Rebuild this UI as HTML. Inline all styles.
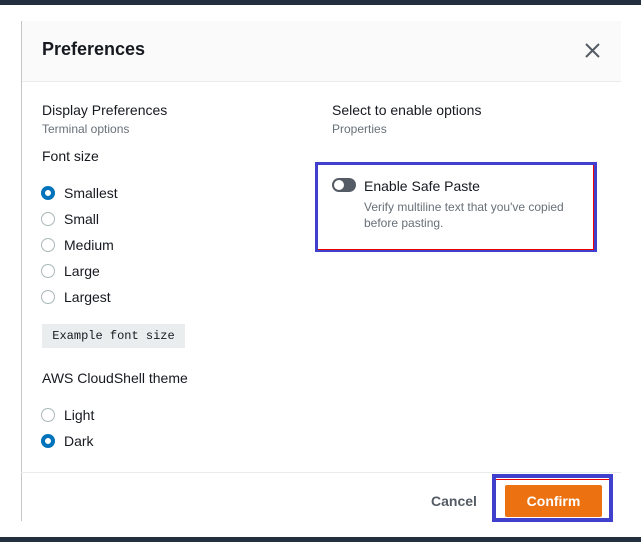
<!DOCTYPE html>
<html><head><style>
body{margin:0;width:641px;height:542px;background:#fff;position:relative;overflow:hidden;font-family:"Liberation Sans",sans-serif;color:#16191f}
.a{position:absolute}
.t{font-size:14px}
.s{font-size:12px;color:#687078}
.r{position:absolute;width:14px;height:14px;border:1.5px solid #aab7b8;border-radius:50%;box-sizing:border-box;margin-left:-1px;margin-top:-1px}
.r.on{border:4px solid #0073bb}
</style></head><body>
<div class="a" style="left:0;top:0;width:641px;height:5px;background:#232f3e"></div>
<div class="a" style="left:0;top:537px;width:641px;height:5px;background:#232f3e"></div>
<div class="a" style="left:21px;top:21px;width:600px;height:60px;background:#fafafa;border-bottom:1px solid #e9ebed"></div>
<div class="a" style="left:21px;top:21px;width:1px;height:500px;background:#c5c5c5"></div>
<div class="a" style="left:42px;top:39px;font-size:18px;font-weight:bold">Preferences</div>
<svg class="a" style="left:585px;top:43px" width="15" height="15" viewBox="0 0 15 15"><path d="M1 1L14 14M14 1L1 14" stroke="#545b64" stroke-width="2"/></svg>
<div class="a t" style="left:42px;top:102px">Display Preferences</div>
<div class="a s" style="left:42px;top:122px">Terminal options</div>
<div class="a t" style="left:42px;top:148px">Font size</div>
<div class="r on" style="left:42px;top:187px"></div><div class="a t" style="left:64px;top:185px">Smallest</div>
<div class="r" style="left:42px;top:213px"></div><div class="a t" style="left:64px;top:211px">Small</div>
<div class="r" style="left:42px;top:239px"></div><div class="a t" style="left:64px;top:237px">Medium</div>
<div class="r" style="left:42px;top:265px"></div><div class="a t" style="left:64px;top:263px">Large</div>
<div class="r" style="left:42px;top:291px"></div><div class="a t" style="left:64px;top:289px">Largest</div>
<div class="a" style="left:42px;top:324px;width:143px;height:24px;background:#eaeded;font:12px 'Liberation Mono',monospace;line-height:24px;text-align:center">Example font size</div>
<div class="a t" style="left:42px;top:370px">AWS CloudShell theme</div>
<div class="r" style="left:42px;top:409px"></div><div class="a t" style="left:64px;top:407px">Light</div>
<div class="r on" style="left:42px;top:435px"></div><div class="a t" style="left:64px;top:433px">Dark</div>
<div class="a t" style="left:332px;top:102px">Select to enable options</div>
<div class="a s" style="left:332px;top:122px">Properties</div>
<div class="a" style="left:315px;top:162px;width:282px;height:90px;box-sizing:border-box;border:3px solid #4040cc"></div>
<div class="a" style="left:593px;top:165px;width:1px;height:84px;background:#e00"></div>
<div class="a" style="left:318px;top:249px;width:276px;height:1px;background:#e00"></div>
<div class="a" style="left:332px;top:178px;width:24px;height:14px;border-radius:7px;background:#545b64"></div>
<div class="a" style="left:334px;top:180px;width:10px;height:10px;border-radius:50%;background:#fff"></div>
<div class="a t" style="left:364px;top:178px">Enable Safe Paste</div>
<div class="a s" style="left:364px;top:199px;line-height:16px">Verify multiline text that you've copied<br>before pasting.</div>
<div class="a" style="left:21px;top:472px;width:600px;height:1px;background:#e9ebed"></div>
<div class="a" style="left:431px;top:493px;font-size:14px;font-weight:bold;color:#545b64">Cancel</div>
<div class="a" style="left:492px;top:474px;width:121px;height:48px;box-sizing:border-box;border:4px solid #4040cc"></div>
<div class="a" style="left:496px;top:479px;width:113px;height:1px;background:#e00"></div>
<div class="a" style="left:505px;top:485px;width:97px;height:32px;background:#ec7211;border-radius:2px;color:#fff;font-weight:bold;font-size:14px;line-height:32px;text-align:center">Confirm</div>
</body></html>
